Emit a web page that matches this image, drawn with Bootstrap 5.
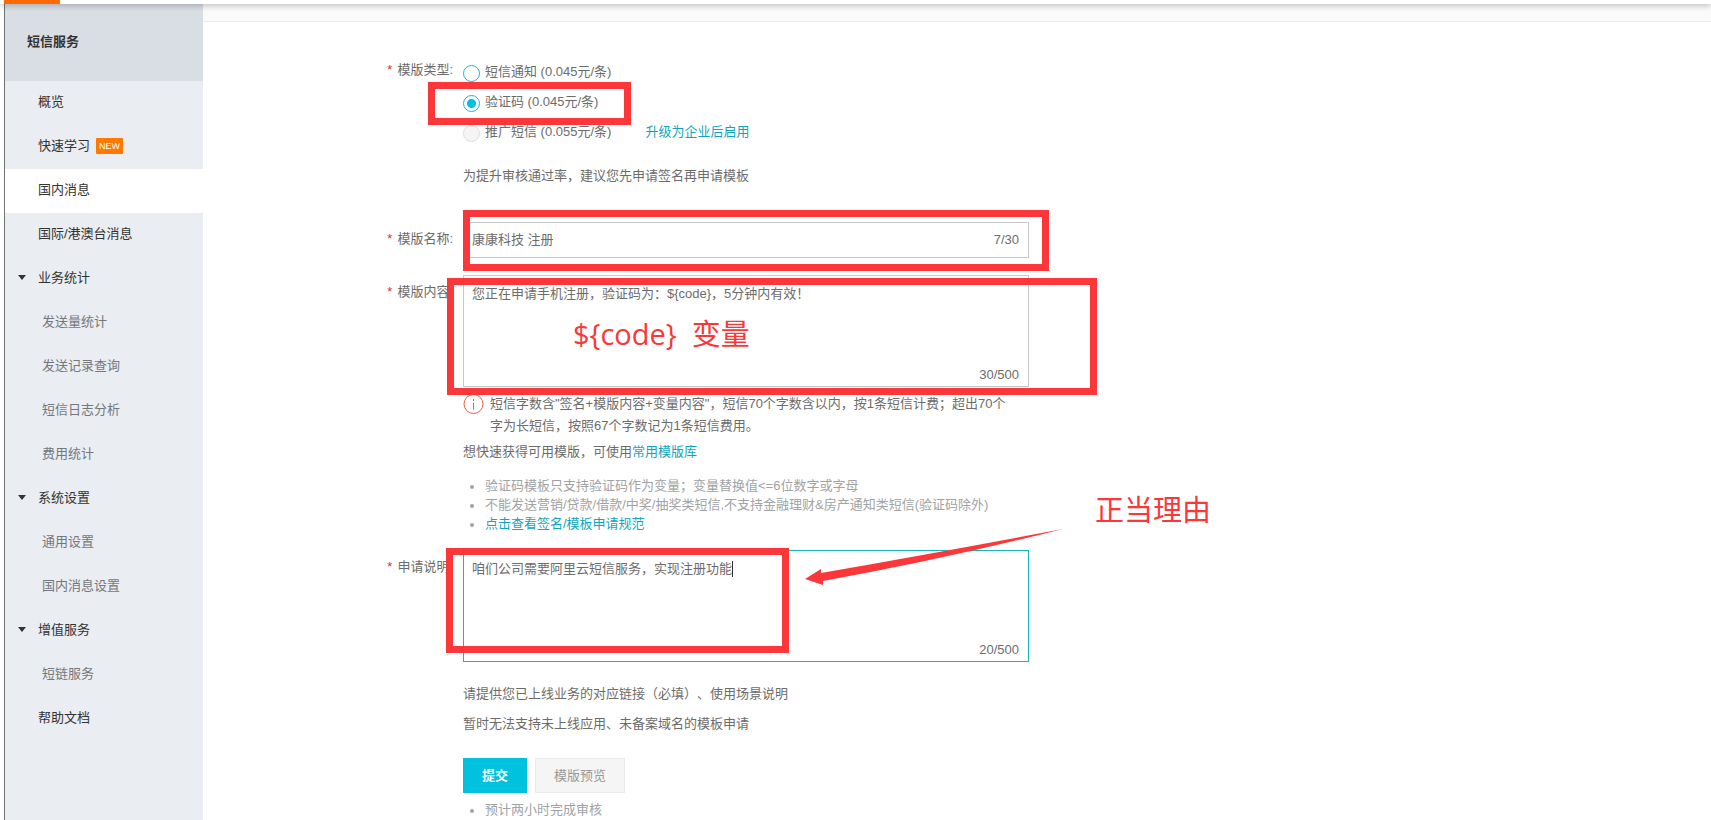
<!DOCTYPE html>
<html lang="zh-CN">
<head>
<meta charset="utf-8">
<meta name="viewport" content="width=device-width, initial-scale=1">
<title>短信服务</title>
<link href="https://cdn.jsdelivr.net/npm/bootstrap@5.3.0/dist/css/bootstrap.min.css" rel="stylesheet">
<style>
  :root { --accent: #00c1de; --link: #12a5bd; --pen: #fb3739; }
  body { font: 13px/22px "Liberation Sans", "Noto Sans CJK SC", sans-serif; text-spacing-trim: space-all; color: #6c6c6c; background: #fff; }
  a { color: var(--link); text-decoration: none; }

  .topbar { height: 4px; padding-left: 4px; box-shadow: 0 1px 6px rgba(0, 0, 0, .35); z-index: 3; }
  .topbar-logo { width: 56px; background: #ff6a00; }
  .shell { min-height: calc(100vh - 4px); padding-left: 4px; }

  .side { width: 199px; background: #eaedf1; border-left: 1px solid #6f7472; }
  .side-title { height: 77px; padding: 0 0 1px 22px; background: #d9dde4; color: #333; font-size: 13px; font-weight: 700; }
  .side .nav-link { height: 44px; padding: 0 0 2px 33px; color: #333; position: relative; }
  .side .nav-link.active { background: #fff; }
  .side .nav-link.sub { padding-left: 37px; color: #74787e; }
  .side .nav-link svg { position: absolute; left: 13px; top: 18px; }
  .tag-new { background: #ff7800; font-size: 9px; line-height: 16px; padding: 0 3px; border-radius: 1px; font-weight: 400; margin-left: 6px; }

  .crumb { height: 18px; background: #fafafa; border-bottom: 1px solid #e9ecec; }
  .sheet { padding-top: 31px; }
  .field-label { width: 250px; padding: 6px 0 0; text-align: right; flex-shrink: 0; }
  .field-label::before { content: "*"; color: #d93026; margin-right: 5px; }
  .field-body { margin-left: 10px; max-width: 566px; }
  .row-gap { margin-top: 17px; }

  .type-list { padding-top: 5px; }
  .type-row { height: 30px; }
  .type-row label, .type-link { padding-bottom: 2px; }
  .type-row .form-check-input { width: 17px; height: 17px; margin: 0 5px 0 0; border: 1px solid var(--accent); background: #fff; box-shadow: none; }
  .type-row .form-check-input:checked { background: radial-gradient(circle, var(--accent) 0 4px, #fff 5px); }
  .type-row .form-check-input:disabled { border-color: #ddd; background: #f5f5f5; opacity: 1; }
  .type-row .form-check-input:disabled ~ label { opacity: 1; }
  .type-link { margin-left: 34px; }

  .field-body .form-control { font-size: 13px; line-height: 20px; color: #6c6c6c; border: 1px solid #c4c9cc; border-radius: 0; padding: 7px 8px; box-shadow: none; resize: none; display: block; }
  .field-body input.form-control { height: 36px; padding: 4px 8px 8px; }
  .field-body textarea.form-control { height: 112px; padding-top: 8px; }
  .field-body .form-control.current { border-color: #1ab5b8; }
  .counter { position: absolute; right: 10px; bottom: 2px; line-height: 20px; }
  .counter-mid { bottom: 8px; }
  .caret { position: absolute; left: calc(9px + 20em); top: 11px; width: 1px; height: 16px; background: #333; }

  .info-note { margin-top: 6px; padding-right: 16px; gap: 6px; }
  .info-note svg { flex-shrink: 0; }
  .rule-list { list-style: none; padding: 0; margin: 14px 0 0; line-height: 18px; gap: 1px; color: #a0a3a6; }
  .rule-list li { padding-left: 22px; position: relative; }
  .rule-list li::before { content: ""; position: absolute; left: 7px; top: 8px; width: 4px; height: 4px; border-radius: 50%; background: #a0a3a6; }

  .act { height: 35px; border-radius: 0; font-size: 13px; line-height: 20px; padding: 0 18px; }
  .act-main, .act-main:hover { background: var(--accent); border-color: var(--accent); color: #fff; font-weight: 700; }
  .act-soft, .act-soft:hover { background: #f5f5f5; border-color: #ebebeb; color: #999; }

  /* hand-drawn notes laid over the form */
  .pen-box { position: absolute; border: 7px solid var(--pen); z-index: 2; pointer-events: none; }
  .pen-type { left: -35px; top: -6px; width: 203px; height: 43px; }
  .pen-name { left: 0; top: -12px; width: calc(100% + 20px); height: 61px; }
  .pen-content { left: -16px; top: 3px; width: calc(100% + 84px); height: 117px; }
  .pen-reason { left: -17px; top: -2px; width: 343px; height: 105px; }
  .pen-text { position: absolute; z-index: 2; color: var(--pen); font: 29px/40px "Open Sans", "Noto Sans CJK SC", sans-serif; white-space: pre; pointer-events: none; }
  .pen-var { left: 110px; top: 39px; }
  .pen-why { left: 632px; top: -60px; }
  .pen-arrow { position: absolute; left: 342px; top: -22px; z-index: 2; pointer-events: none; }
</style>
</head>
<body>
<header class="topbar position-relative d-flex bg-white"><div class="topbar-logo"></div></header>
<div class="shell d-flex">
  <aside class="side flex-shrink-0">
    <h1 class="side-title d-flex align-items-center mb-0">短信服务</h1>
    <nav class="nav flex-column">
      <a class="nav-link d-flex align-items-center" href="#">概览</a>
      <a class="nav-link d-flex align-items-center" href="#">快速学习<span class="badge tag-new">NEW</span></a>
      <a class="nav-link active d-flex align-items-center" href="#">国内消息</a>
      <a class="nav-link d-flex align-items-center" href="#">国际/港澳台消息</a>
      <a class="nav-link d-flex align-items-center" href="#"><svg width="8" height="5"><path d="M0 0h8L4 5z" fill="#333"/></svg>业务统计</a>
      <a class="nav-link sub d-flex align-items-center" href="#">发送量统计</a>
      <a class="nav-link sub d-flex align-items-center" href="#">发送记录查询</a>
      <a class="nav-link sub d-flex align-items-center" href="#">短信日志分析</a>
      <a class="nav-link sub d-flex align-items-center" href="#">费用统计</a>
      <a class="nav-link d-flex align-items-center" href="#"><svg width="8" height="5"><path d="M0 0h8L4 5z" fill="#333"/></svg>系统设置</a>
      <a class="nav-link sub d-flex align-items-center" href="#">通用设置</a>
      <a class="nav-link sub d-flex align-items-center" href="#">国内消息设置</a>
      <a class="nav-link d-flex align-items-center" href="#"><svg width="8" height="5"><path d="M0 0h8L4 5z" fill="#333"/></svg>增值服务</a>
      <a class="nav-link sub d-flex align-items-center" href="#">短链服务</a>
      <a class="nav-link d-flex align-items-center" href="#">帮助文档</a>
    </nav>
  </aside>
  <main class="flex-grow-1">
    <div class="crumb"></div>
    <form class="sheet">
      <div class="d-flex" role="radiogroup" aria-labelledby="type-label">
        <div class="field-label" id="type-label">模版类型:</div>
        <div class="field-body flex-grow-1">
          <div class="type-list">
            <div class="type-row d-flex align-items-center">
              <input class="form-check-input" type="radio" name="type" id="t1"><label for="t1">短信通知 (0.045元/条)</label>
            </div>
            <div class="type-row d-flex align-items-center position-relative">
              <input class="form-check-input" type="radio" name="type" id="t2" checked><label for="t2">验证码 (0.045元/条)</label>
              <div class="pen-box pen-type"></div>
            </div>
            <div class="type-row d-flex align-items-center">
              <input class="form-check-input" type="radio" name="type" id="t3" disabled><label for="t3">推广短信 (0.055元/条)</label>
              <a class="type-link" href="#">升级为企业后启用</a>
            </div>
          </div>
          <p class="row-gap mb-0">为提升审核通过率，建议您先申请签名再申请模板</p>
        </div>
      </div>

      <div class="d-flex" style="margin-top:35px">
        <label class="field-label" for="name">模版名称:</label>
        <div class="field-body flex-grow-1">
          <div class="position-relative">
            <input class="form-control" id="name" type="text" value="康康科技 注册">
            <span class="counter counter-mid">7/30</span>
            <div class="pen-box pen-name"></div>
          </div>
        </div>
      </div>

      <div class="d-flex row-gap">
        <label class="field-label" for="content">模版内容:</label>
        <div class="field-body flex-grow-1">
          <div class="position-relative">
            <textarea class="form-control" id="content">您正在申请手机注册，验证码为：${code}，5分钟内有效！</textarea>
            <span class="counter">30/500</span>
            <div class="pen-box pen-content"></div>
            <div class="pen-text pen-var">${code}  变量</div>
          </div>
          <div class="info-note d-flex">
            <svg width="21" height="22" viewBox="0 0 21 22" fill="none" stroke="#e8604c"><circle cx="10.500" cy="11" r="9.500"/><path d="M10.500 9.500v7M10.500 6v2"/></svg>
            <span>短信字数含"签名+模版内容+变量内容"，短信70个字数含以内，按1条短信计费；超出70个字为长短信，按照67个字数记为1条短信费用。</span>
          </div>
          <p class="mt-1 mb-0">想快速获得可用模版，可使用<a href="#">常用模版库</a></p>
          <ul class="rule-list d-grid">
            <li>验证码模板只支持验证码作为变量；变量替换值&lt;=6位数字或字母</li>
            <li>不能发送营销/贷款/借款/中奖/抽奖类短信,不支持金融理财&amp;房产通知类短信(验证码除外)</li>
            <li><a href="#">点击查看签名/模板申请规范</a></li>
          </ul>
        </div>
      </div>

      <div class="d-flex row-gap">
        <label class="field-label" for="reason">申请说明:</label>
        <div class="field-body flex-grow-1">
          <div class="position-relative">
            <textarea class="form-control current" id="reason">咱们公司需要阿里云短信服务，实现注册功能</textarea>
            <span class="caret"></span>
            <span class="counter">20/500</span>
            <div class="pen-box pen-reason"></div>
            <svg class="pen-arrow" width="262" height="60" viewBox="0 0 262 60"><path d="M0 51 16 41 16 45 Q130 25 258 1 Q140 31 18 53L18 57z" fill="#fb3739"/></svg>
            <div class="pen-text pen-why">正当理由</div>
          </div>
          <p class="mb-2" style="margin-top:21px">请提供您已上线业务的对应链接（必填）、使用场景说明</p>
          <p style="margin-bottom:23px">暂时无法支持未上线应用、未备案域名的模板申请</p>
          <div class="d-flex gap-2">
            <button class="btn act act-main" type="submit">提交</button>
            <button class="btn act act-soft" type="button">模版预览</button>
          </div>
          <ul class="rule-list mt-2"><li>预计两小时完成审核</li></ul>
        </div>
      </div>
    </form>
  </main>
</div>
<script src="https://cdn.jsdelivr.net/npm/bootstrap@5.3.0/dist/js/bootstrap.bundle.min.js"></script>
</body>
</html>
